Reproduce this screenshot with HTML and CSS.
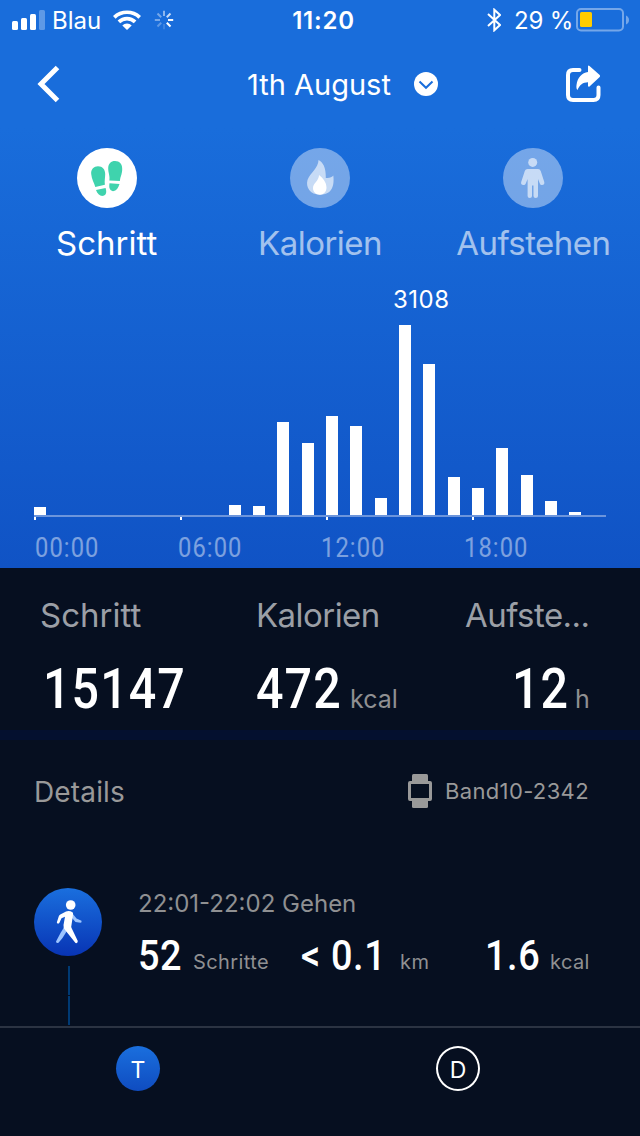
FILE: index.html
```html
<!DOCTYPE html>
<html lang="de">
<head>
    <meta charset="utf-8">
    <title>Schritt</title>
    <link rel="stylesheet" href="styles.css">
</head>

<body>
    <div class="hero">
        <div class="status">
            <div class="status-left">
                <svg class="signal" width="34" height="20" viewBox="0 0 34 20">
                    <rect x="0" y="11" width="6" height="9" rx="1.5"/>
                    <rect x="9" y="8" width="6" height="12" rx="1.5"/>
                    <rect x="18" y="4" width="6" height="16" rx="1.5"/>
                    <rect x="27" y="0" width="6" height="20" rx="1.5" opacity=".3"/>
                </svg>
                <span class="carrier">Blau</span>
                <svg class="wifi" width="28" height="20" viewBox="0 0 28 20">
                    <path d="M0 6.1A20 20 0 0 1 28 6.1L25.4 8.7A16.3 16.3 0 0 0 2.6 8.7Z"/>
                    <path d="M4.6 10.6A13.5 13.5 0 0 1 23.4 10.6L20.8 13.2A9.8 9.8 0 0 0 7.2 13.2Z"/>
                    <path d="M9.3 15.4A6.8 6.8 0 0 1 18.7 15.4L14 20Z"/>
                </svg>
                <svg class="spinner" width="20" height="20" viewBox="0 0 20 20">
                    <path d="M10 0.8V6" opacity=".5"/>
                    <path d="M16.5 3.5L12.8 7.2" opacity=".75"/>
                    <path d="M19.2 10H14" opacity=".95"/>
                    <path d="M16.5 16.5L12.8 12.8"/>
                    <path d="M10 19.2V14" opacity=".15"/>
                    <path d="M3.5 16.5L7.2 12.8" opacity=".3"/>
                    <path d="M0.8 10H6" opacity=".4"/>
                    <path d="M3.5 3.5L7.2 7.2" opacity=".4"/>
                </svg>
            </div>
            <div class="clock">11:20</div>
            <div class="status-right">
                <svg class="bluetooth" width="14" height="24" viewBox="0 0 14 24">
                    <path d="M1 6L13 17L7.3 22.3V1.7L13 7L1 18"/>
                </svg>
                <span class="percent">29 %</span>
                <svg class="battery" width="54" height="24" viewBox="0 0 54 24">
                    <rect class="battery-shell" x="1" y="1" width="46" height="21.5" rx="4"/>
                    <path class="battery-cap" d="M50 7.5Q53 9 53 12T50 16.5Z"/>
                    <rect class="battery-level" x="4" y="4" width="12" height="15" rx="1.5"/>
                </svg>
            </div>
        </div>

        <div class="nav">
            <svg class="back" width="24" height="38" viewBox="0 0 24 38">
                <path d="M20.500 2.5L4 19L20.500 35.500"/>
            </svg>
            <div class="title">
                <span class="date">1th August</span>
                <svg width="24" height="24" viewBox="0 0 24 24">
                    <circle cx="12" cy="12" r="12" fill="#fff"/>
                    <path d="M5.5 9.5L12 15.8L18.5 9.5" fill="none" stroke="#196ddb" stroke-width="2"/>
                </svg>
            </div>
            <svg class="share" width="36" height="38" viewBox="0 0 36 38">
                <path class="share-box" d="M13.5 5H7Q2 5 2 10V30Q2 35 7 35H27.500Q32.500 35 32.500 30V22.500"/>
                <path class="share-arrow" d="M22 1Q22.500 0 23.500 1L33.700 10Q34.500 11 33.700 12L23.500 21.500Q22.500 22.300 22 21V17.300C17 17.300 13.500 20 11.500 25Q10 24 10.500 20C11.500 12 16 8 22 7Z"/>
            </svg>
        </div>

        <div class="tabs">
            <div class="tab active">
                <div class="tab-icon">
                    <svg width="60" height="60" viewBox="0 0 60 60" fill="#3fd3ad">
                        <path d="M14.200 26C13.800 21 17 18.200 21 18.200C25.500 18.200 28.200 21.500 28.200 26C28.200 30 27.300 33 27.900 36.800L18.300 39C17.300 35 14.500 31 14.200 26Z"/>
                        <path d="M19 42L28.600 40C29.800 44 29.300 46.700 26.500 47.800C23 48.500 20.500 46 19 42Z"/>
                        <path d="M31.200 20.500C31.200 15.500 34 13 38 13C42.500 13 45.700 16 45.200 22C44.800 27 43.200 29 42.900 33.100L32.300 32.500C33.200 28 31.200 25 31.200 20.500Z"/>
                        <path d="M32.500 35.300L42.500 36C41.200 40.300 39.500 42.700 36 43.200C32.500 42.700 31.800 39.500 32.500 35.300Z"/>
                    </svg>
                </div>
                <span class="tab-label">Schritt</span>
            </div>
            <div class="tab">
                <div class="tab-icon">
                    <svg width="60" height="60" viewBox="0 0 60 60">
                        <path d="M28.500 12C33 14.500 36 19 35.800 30C39.500 30.500 42 29 43.300 27.500C44.500 37 42.500 46.700 30 46.700C20 46.700 15.500 39 17.500 32C20 25 28.500 20 28.500 12Z" fill="#fff" fill-opacity=".6"/>
                        <path d="M29 27C33 30 36.500 34.500 36.500 39.500C36.500 44 33.500 46.700 30 46.700C26 46.700 23 44 23 40C23 35 29 33 29 27Z" fill="#fff"/>
                    </svg>
                </div>
                <span class="tab-label tight">Kalorien</span>
            </div>
            <div class="tab">
                <div class="tab-icon">
                    <svg width="60" height="60" viewBox="0 0 60 60" fill="#fff" fill-opacity=".6">
                        <circle cx="29.700" cy="14.400" r="4.500"/>
                        <path d="M24.500 21H35Q37 21 37.700 23L41.300 34Q41.800 37 39 37Q37.500 37.300 36.800 35.500L35 31V48Q35 50 32.700 50Q30.500 50 30.500 48V37.500H29V48Q29 50 26.800 50Q24.600 50 24.600 48V31L22.800 35.500Q22 37.300 20.500 37Q17.500 37 18.200 34L21.800 23Q22.500 21 24.500 21Z"/>
                    </svg>
                </div>
                <span class="tab-label tight">Aufstehen</span>
            </div>
        </div>

        <div class="chart">
            <div class="bars" id="bars"></div>
            <div class="axis">
                <i class="tick"></i>
                <i class="tick"></i>
                <i class="tick"></i>
                <i class="tick"></i>
            </div>
            <div class="hours">
                <span class="din">00:00</span>
                <span class="din">06:00</span>
                <span class="din">12:00</span>
                <span class="din">18:00</span>
            </div>
        </div>
    </div>

    <div class="totals">
        <div class="total">
            <div class="total-label">Schritt</div>
            <div class="total-value total-steps"><span class="din">15147</span></div>
        </div>
        <div class="total">
            <div class="total-label tight">Kalorien</div>
            <div class="total-value total-kcal"><span class="din">472</span><small>kcal</small></div>
        </div>
        <div class="total">
            <div class="total-label tight">Aufste...</div>
            <div class="total-value total-hours"><span class="din">12</span><small>h</small></div>
        </div>
    </div>

    <div class="details">
        <div class="details-head">
            <span class="details-title">Details</span>
            <div class="device">
                <svg width="24" height="34" viewBox="0 0 24 34">
                    <rect x="4" y="0" width="16" height="9" rx="1.500" fill="#999"/>
                    <rect x="4" y="25" width="16" height="9" rx="1.500" fill="#999"/>
                    <rect x="1.500" y="8.500" width="21" height="17" rx=".5" fill="#060f20" stroke="#999" stroke-width="3"/>
                </svg>
                <span class="device-name">Band10-2342</span>
            </div>
        </div>

        <div class="activity">
            <div class="timeline">
                <svg width="68" height="68" viewBox="0 0 68 68">
                    <defs>
                        <linearGradient id="walkBg" x1="0" y1="0" x2="0" y2="1">
                            <stop offset="0" stop-color="#1a6fde"/>
                            <stop offset="1" stop-color="#0834b4"/>
                        </linearGradient>
                    </defs>
                    <circle cx="34" cy="34" r="34" fill="url(#walkBg)"/>
                    <g fill="#9cc4ff">
                        <path d="M38.500 25.500L42.500 30.500L47.500 32.700Q48 34.500 46.500 34.800L41.500 34L38 30Z"/>
                        <path d="M30.500 38.500L33.500 42L28.500 50L24.500 54.800Q22.500 55.800 22 53.500L26.500 45Z"/>
                    </g>
                    <circle cx="36.700" cy="17" r="4.800" fill="#fff"/>
                    <path d="M32 23.500Q35 22 38.500 24.200Q39.300 25 39 27L37.200 39Q38 41 43.800 53Q43.800 55.700 41.500 55L31.500 42.500Q29 40 29.500 37L31 28.800L27.500 30.300L25.300 35Q23.500 36.500 22.800 34.500L24.800 28.300Q25.200 27 26.300 26.500Z" fill="#fff"/>
                </svg>
                <div class="dash"></div>
                <div class="dash"></div>
            </div>
            <div class="activity-body">
                <div class="activity-time">22:01-22:02 Gehen</div>
                <div class="metrics">
                    <div class="metric metric-steps"><span class="din">52</span><small>Schritte</small></div>
                    <div class="metric metric-km"><span class="din">&lt; 0.1</span><small>km</small></div>
                    <div class="metric metric-kcal"><span class="din">1.6</span><small>kcal</small></div>
                </div>
            </div>
        </div>
    </div>

    <div class="footer">
        <div class="footer-item"><span class="badge badge-on">T</span></div>
        <div class="footer-item"><span class="badge">D</span></div>
    </div>

    <script>
        // bar heights in px, one for each hour of the day
        const hours = [8, 0, 0, 0, 0, 0, 0, 0, 10, 9, 93, 72, 99, 89, 17, 190, 151, 38, 27, 67, 40, 14, 3, 0];
        const peak = Math.max(...hours);
        const bars = document.getElementById('bars');

        hours.forEach((height) => {
            const bar = document.createElement('div');
            bar.className = 'bar';
            bar.style.height = height + 'px';
            if (height === peak) {
                bar.innerHTML = '<span class="peak">3108</span>';
            }
            bars.appendChild(bar);
        });
    </script>
</body>
</html>
```
FILE: styles.css
```css
* {
    box-sizing: border-box;
}

body {
    margin: 0;
    width: 640px;
    height: 1136px;
    overflow: hidden;
    display: flex;
    flex-direction: column;
    background-color: #060f20;
    color: #fff;
    font-family: Inter, "Liberation Sans", sans-serif;
    white-space: nowrap;
}

svg {
    display: block;
    flex: none;
}

/* narrow digits */
.din {
    display: inline-block;
    font-family: Roboto, "Liberation Sans", sans-serif;
    font-weight: 500;
    transform: scaleX(.88);
    transform-origin: left center;
}

.tight {
    letter-spacing: -.55px;
}

.hero {
    height: 568px;
    background: linear-gradient(#196ddb 128px, #1053c5);
}

.status {
    display: grid;
    grid-template-columns: 1fr auto 1fr;
    align-items: center;
    height: 40px;
    padding: 0 11px 0 12px;
    font-size: 24px;
}

.status svg {
    fill: #fff;
}

.status-left,
.status-right {
    display: flex;
    align-items: center;
}

.status-right {
    justify-content: flex-end;
}

.carrier {
    margin-left: 6px;
    width: 47px;
}

.wifi {
    margin-left: 14px;
}

.status .spinner {
    margin-left: 13px;
    fill: none;
    stroke: #fff;
    stroke-width: 2;
}

.clock {
    padding-left: 6px;
    font-weight: 600;
    letter-spacing: .8px;
}

.status .bluetooth {
    fill: none;
    stroke: #fff;
    stroke-width: 2;
}

.percent {
    width: 57px;
    margin: 0 5px 0 13px;
    letter-spacing: -.2px;
}

.status .battery {
    margin-right: -1px;
}

.status .battery-shell {
    fill: none;
    stroke: #fff;
    stroke-opacity: .4;
    stroke-width: 2;
}

.battery-cap {
    fill-opacity: .4;
}

.status .battery-level {
    fill: #ffcc00;
}

.nav {
    display: flex;
    justify-content: space-between;
    align-items: center;
    height: 88px;
    padding: 0 38px 0 37px;
}

.back {
    fill: none;
    stroke: #fff;
    stroke-width: 5;
}

.title {
    display: flex;
    align-items: center;
    margin-left: 58px;
}

.date {
    width: 167px;
    font-size: 29px;
}

.share-box {
    fill: none;
    stroke: #fff;
    stroke-width: 4;
    stroke-linecap: round;
}

.share-arrow {
    fill: #fff;
}

.tabs {
    display: grid;
    grid-template-columns: repeat(3, 1fr);
    padding-top: 20px;
}

.tab {
    display: flex;
    flex-direction: column;
    align-items: center;
}

.tab-icon {
    border-radius: 50%;
    background-color: rgba(255, 255, 255, .4);
}

.tab-label {
    margin-top: 15px;
    font-size: 33px;
    line-height: 40px;
    opacity: .6;
}

.active .tab-icon {
    background-color: #fff;
}

.active .tab-label {
    opacity: 1;
}

.chart {
    padding: 62px 34px 0;
}

.bars {
    display: flex;
    justify-content: space-between;
    align-items: flex-end;
    height: 190px;
}

.bar {
    position: relative;
    width: 12.17px;
    background-color: #fff;
}

.peak {
    position: absolute;
    left: -6px;
    top: -40px;
    font-size: 24px;
    line-height: 30px;
    letter-spacing: .5px;
}

.axis {
    display: grid;
    grid-template-columns: repeat(4, 146px);
    height: 5px;
    border-top: 2px solid #6c95dc;
}

.tick {
    width: 2px;
    height: 3px;
    background-color: #fff;
}

.hours {
    display: grid;
    grid-template-columns: repeat(4, 143px);
    padding: 12px 0 0 1px;
    font-size: 27px;
    line-height: 32px;
}

.hours .din {
    font-weight: 400;
    letter-spacing: 1.2px;
    opacity: .45;
}

.totals {
    display: grid;
    grid-template-columns: 216px 209px 1fr;
    height: 172px;
    padding: 27px 40px 0;
    border-bottom: 10px solid #04102f;
}

.total-label {
    font-size: 33px;
    line-height: 40px;
    color: #9b9fa6;
}

.total-value {
    display: flex;
    align-items: baseline;
    margin-top: 22px;
    font-size: 55px;
    line-height: 64px;
}

.total-value .din {
    letter-spacing: 1.2px;
}

small {
    color: #8f9092;
}

.total-value small {
    font-size: 25px;
}

.total-steps {
    padding-left: 3px;
}

.total-kcal .din {
    width: 94px;
}

.total-hours {
    padding-left: 47px;
}

.total-hours .din {
    width: 63px;
}

.details {
    flex: 1;
    padding: 30px 51px 0 34px;
}

.details-head {
    display: flex;
    justify-content: space-between;
    align-items: center;
    height: 42px;
    color: #999;
}

.details-title {
    padding-top: 2px;
    font-size: 28px;
    letter-spacing: .15px;
}

.device {
    display: flex;
    align-items: center;
    gap: 13px;
    font-size: 22px;
}

.device-name {
    width: 144px;
    letter-spacing: .35px;
}

.activity {
    display: flex;
    gap: 36px;
    padding-top: 76px;
}

.timeline {
    display: flex;
    flex-direction: column;
    align-items: center;
    width: 68px;
}

.dash {
    width: 2px;
    height: 29px;
    margin: 1px 0 0 2px;
    background-color: #003a74;
}

.timeline svg {
    margin-bottom: 9px;
}

.activity-body {
    flex: 1;
}

.activity-time {
    padding-top: 1px;
    font-size: 24px;
    line-height: 30px;
    color: #8f9092;
}

.metrics {
    display: grid;
    grid-template-columns: 163px 184px 1fr;
    margin-top: 10px;
    font-size: 43px;
    line-height: 52px;
}

.metric {
    display: flex;
    align-items: baseline;
}

.metric small {
    position: relative;
    top: -1px;
    font-size: 20px;
    letter-spacing: .4px;
}

.metric .din {
    letter-spacing: .7px;
}

.metric-steps .din {
    width: 55px;
}

.metric-km .din {
    width: 99px;
}

.metric-kcal .din {
    width: 65px;
}

.footer {
    display: grid;
    grid-template-columns: 1fr 1fr;
    height: 110px;
    padding-top: 18px;
    border-top: 2px solid #2b3342;
}

.footer-item {
    padding-left: 116px;
}

.badge {
    display: flex;
    justify-content: center;
    align-items: center;
    width: 44px;
    height: 45px;
    padding-top: 2px;
    border: 2px solid #fff;
    border-radius: 50%;
    font-size: 23px;
}

.badge-on {
    border: none;
    background: linear-gradient(#1a6fde, #0f4cc0);
}
```
